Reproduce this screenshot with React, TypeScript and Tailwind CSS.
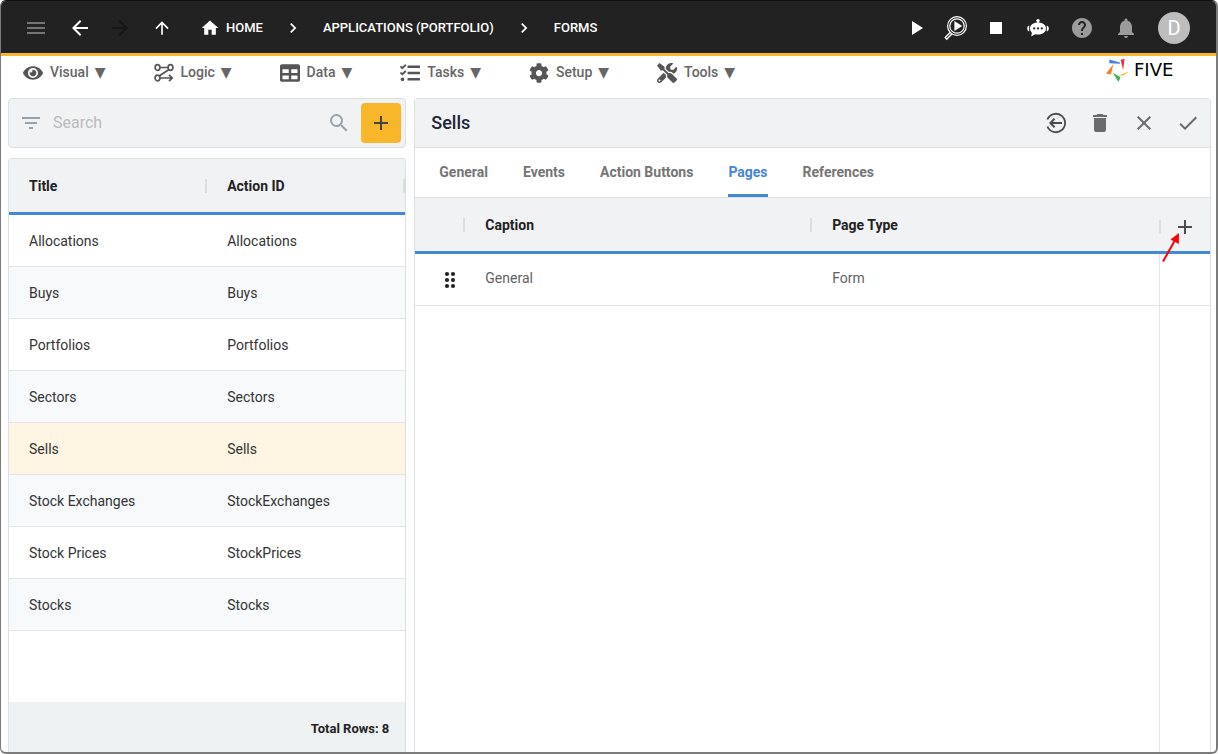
import type { ReactNode } from "react";
import { FaCog, FaEye, FaTable, FaTasks, FaTools } from "react-icons/fa";
import {
  MdAdd,
  MdArrowBack,
  MdArrowForward,
  MdArrowUpward,
  MdCheck,
  MdChevronRight,
  MdClose,
  MdDelete,
  MdFilterList,
  MdHelp,
  MdHome,
  MdMenu,
  MdNotifications,
  MdPlayArrow,
  MdSearch,
  MdStop,
} from "react-icons/md";

const MENUS = [
  { label: "Visual", icon: <FaEye size={20} /> },
  { label: "Logic", icon: <LogicIcon /> },
  { label: "Data", icon: <FaTable size={20} /> },
  { label: "Tasks", icon: <FaTasks size={20} /> },
  { label: "Setup", icon: <FaCog size={20} /> },
  { label: "Tools", icon: <FaTools size={20} /> },
];

const FORMS = [
  { title: "Allocations", actionId: "Allocations" },
  { title: "Buys", actionId: "Buys" },
  { title: "Portfolios", actionId: "Portfolios" },
  { title: "Sectors", actionId: "Sectors" },
  { title: "Sells", actionId: "Sells" },
  { title: "Stock Exchanges", actionId: "StockExchanges" },
  { title: "Stock Prices", actionId: "StockPrices" },
  { title: "Stocks", actionId: "Stocks" },
];

const TABS = ["General", "Events", "Action Buttons", "Pages", "References"];

const SELECTED_FORM = "Sells";
const ACTIVE_TAB = "Pages";

const HEAD_CELL = "border-b-[3px] border-[#4486d9] p-0 font-bold";
const BODY_CELL = "border-b border-[#e2e4e6] p-0";

function LogicIcon() {
  return (
    <svg width="20" height="20" viewBox="0 0 20 20" fill="none" stroke="currentColor" strokeWidth="1.7">
      <ellipse cx="3.5" cy="4.5" rx="2.4" ry="2.8" />
      <ellipse cx="16.5" cy="4.5" rx="2.4" ry="2.8" />
      <ellipse cx="3.5" cy="15" rx="2.4" ry="2.8" />
      <path d="M6 4.5h8M15 6.5 5.2 13M6 15h12M15 11.8l3.2 3.2-3.2 3.2" />
    </svg>
  );
}

function InspectIcon() {
  return (
    <svg width="24" height="26" viewBox="0 0 24 26" fill="none" stroke="currentColor">
      <circle cx="13" cy="11" r="9.4" strokeWidth="1.2" />
      <circle cx="13" cy="11" r="7.2" strokeWidth="1.2" />
      <path d="M6.2 17.2 1.2 22.6l1.6 1.6 5.2-5.4" strokeWidth="1.3" />
      <path d="M10.4 6v10l7.8-5z" fill="currentColor" stroke="none" />
    </svg>
  );
}

function BotIcon() {
  return (
    <svg width="22" height="20" viewBox="0 0 22 20" fill="currentColor">
      <circle cx="11" cy="2.6" r="1.7" />
      <path d="M10.3 3h1.4v3h-1.4z" />
      <path d="M11 4.6c4.8 0 8 2.5 8 6s-3.2 6-8 6c-1 0-2-.1-2.9-.4L4.2 18.4l.7-3.6C3.7 13.7 3 12.2 3 10.6c0-3.5 3.2-6 8-6z" />
      <path d="M2.2 7.6v6C.9 13.2.2 12.1.2 10.6s.7-2.6 2-3zM19.8 7.6v6c1.300-.4 2-1.500 2-3s-.7-2.600-2-3z" />
      <g fill="#222222">
        <circle cx="7.2" cy="10.4" r="1.1" />
        <circle cx="11" cy="10.4" r="1.1" />
        <circle cx="14.8" cy="10.4" r="1.1" />
      </g>
    </svg>
  );
}

function ReturnIcon() {
  return (
    <svg width="22" height="22" viewBox="0 0 22 22" fill="none" stroke="currentColor" strokeWidth="1.8">
      <path d="M2.4 7.5a9.2 9.2 0 1 1 0 7" />
      <path d="M17 11H5.5M9.6 6.8 5.4 11l4.2 4.2" strokeWidth="2" />
    </svg>
  );
}

function DragIcon() {
  return (
    <svg width="12" height="18" viewBox="0 0 12 18" fill="#222222">
      {[3, 9, 15].map((y) => (
        <g key={y}>
          <circle cx="3" cy={y} r="2.1" />
          <circle cx="9" cy={y} r="2.1" />
        </g>
      ))}
    </svg>
  );
}

function LogoMark() {
  return (
    <svg width="24" height="24" viewBox="0 0 24 24">
      <path d="M3.300 1.500 14 4.500v1.300L3.300 5.200z" fill="#3f84dc" />
      <path d="M14.500 1.700 18.600.8l-1.500 11.400z" fill="#e23b3b" />
      <path d="M23.300 13.200 18 17.200l-6.200.8z" fill="#fbb92e" />
      <path d="M6.800 14.800 14.500 19.200l-2 4.700z" fill="#3fae55" />
      <path d="M7.300 6.300 5 16.400 0 15.600z" fill="#f6812f" />
    </svg>
  );
}

function IconButton({
  label,
  className,
  children,
}: {
  label: string;
  className: string;
  children: ReactNode;
}) {
  return (
    <button type="button" aria-label={label} className={`flex items-center justify-center ${className}`}>
      {children}
    </button>
  );
}

// Short grey handle between two header cells
function ColumnHandle() {
  return <span className="h-3.5 w-0.5 bg-[#dcdddf]" />;
}

function TopBar() {
  return (
    <header className="flex h-[55px] shrink-0 items-center justify-between border-b-[3px] border-[#f8b72b] bg-[#222222] pt-0.5 pr-[26px] pl-[11px] text-white">
      <div className="flex items-center">
        <IconButton label="Menu" className="h-11 w-12 text-[#757575]">
          <MdMenu size={24} />
        </IconButton>
        <IconButton label="Back" className="h-11 w-10">
          <MdArrowBack size={24} />
        </IconButton>
        <IconButton label="Forward" className="h-11 w-10 text-[#161616]">
          <MdArrowForward size={24} />
        </IconButton>
        <IconButton label="Up" className="h-11 w-11">
          <MdArrowUpward size={20} />
        </IconButton>
        <nav aria-label="Breadcrumb" className="ml-4 flex items-center text-[13px] font-medium">
          <a href="#home" className="flex items-center gap-1.5">
            <MdHome size={20} />
            HOME
          </a>
          <MdChevronRight size={20} className="mx-5" />
          <a href="#applications">APPLICATIONS (PORTFOLIO)</a>
          <MdChevronRight size={20} className="mx-5" />
          <a href="#forms">FORMS</a>
        </nav>
      </div>
      <div className="flex items-center">
        <IconButton label="Run" className="h-11 w-10">
          <MdPlayArrow size={24} />
        </IconButton>
        <IconButton label="Inspect" className="h-11 w-10">
          <InspectIcon />
        </IconButton>
        <IconButton label="Stop" className="h-11 w-10">
          <MdStop size={24} />
        </IconButton>
        <IconButton label="Assistant" className="h-11 w-11">
          <BotIcon />
        </IconButton>
        <IconButton label="Help" className="h-11 w-11 text-[#9b9b9b]">
          <MdHelp size={24} />
        </IconButton>
        <IconButton label="Notifications" className="h-11 w-11 text-[#9b9b9b]">
          <MdNotifications size={24} />
        </IconButton>
        <button
          type="button"
          aria-label="Account"
          className="ml-2.5 size-8 rounded-full bg-[#bdbdbd] text-xl leading-8 text-white"
        >
          D
        </button>
      </div>
    </header>
  );
}

function MenuBar() {
  return (
    <div className="flex h-[34px] shrink-0 items-center justify-between pr-[22px] pl-[22px]">
      <nav className="flex items-center gap-12">
        {MENUS.map((menu) => (
          <button
            key={menu.label}
            type="button"
            className="flex items-center text-sm font-medium text-[#666666]"
          >
            <span className="text-[#555555]">{menu.icon}</span>
            <span className="pb-0.5 pl-[7px]">{menu.label}</span>
            <span className="pb-0.5 pl-1.5 [font-family:'DejaVu_Sans',sans-serif]">▼</span>
          </button>
        ))}
      </nav>
      <a href="#five" className="flex w-[88px] items-center gap-1 pb-1.5">
        <LogoMark />
        <span className="text-lg leading-5 text-black [font-family:'DejaVu_Sans',sans-serif]">FIVE</span>
      </a>
    </div>
  );
}

function FormList() {
  return (
    <div className="flex flex-col gap-2.5">
      <div className="flex h-[50px] shrink-0 items-center rounded border border-[#dedfe0] bg-[#f1f2f4] pr-1 pl-2.5 text-[#9aa2a9]">
        <MdFilterList size={24} />
        <input
          type="text"
          aria-label="Search"
          placeholder="Search"
          className="min-w-0 flex-1 bg-transparent pl-2.5 text-base text-[#333333] outline-none placeholder:text-[#b9bbbd]"
        />
        <MdSearch size={24} />
        <IconButton label="Add form" className="ml-2.5 size-10 rounded bg-[#f8b72b] text-[#444444]">
          <MdAdd size={24} />
        </IconButton>
      </div>

      <section className="flex flex-1 flex-col overflow-hidden rounded-t border border-b-0 border-[#dedfe0]">
        <table className="w-full table-fixed border-separate border-spacing-0 text-left text-sm text-[#333333]">
          <thead>
            <tr className="h-14 bg-[#f1f2f4] text-[#222222]">
              <th className={`${HEAD_CELL} pl-5`}>
                <div className="flex items-center justify-between">
                  Title <ColumnHandle />
                </div>
              </th>
              <th className={`${HEAD_CELL} pl-5`}>
                <div className="flex items-center justify-between">
                  Action ID <ColumnHandle />
                </div>
              </th>
            </tr>
          </thead>
          <tbody>
            {FORMS.map((form) => (
              <tr
                key={form.title}
                className={`h-[52px] ${
                  form.title === SELECTED_FORM ? "bg-[#fff5e2]" : "even:bg-[#f8f9fb]"
                }`}
              >
                <td className={`${BODY_CELL} pl-5`}>{form.title}</td>
                <td className={`${BODY_CELL} pl-5`}>{form.actionId}</td>
              </tr>
            ))}
          </tbody>
        </table>
        <div className="mt-auto flex h-[50px] items-center justify-end bg-[#eef2f3] pt-1 pr-4 text-[13px] font-bold text-[#222222]">
          Total Rows: 8
        </div>
      </section>
    </div>
  );
}

function FormDetail() {
  return (
    <section className="flex flex-col rounded-t border border-b-0 border-[#dedfe0]">
      <div className="flex h-[49px] shrink-0 items-center justify-between border-b border-[#dedfe0] bg-[#f1f2f4] pl-4">
        <h1 className="text-lg font-medium text-[#1d2433]">Sells</h1>
        <div className="flex text-[#6b6b6b]">
          <IconButton label="Return" className="size-11 text-[#4d4d4d]">
            <ReturnIcon />
          </IconButton>
          <IconButton label="Delete" className="size-11">
            <MdDelete size={24} />
          </IconButton>
          <IconButton label="Cancel" className="size-11">
            <MdClose size={24} />
          </IconButton>
          <IconButton label="Save" className="size-11">
            <MdCheck size={24} />
          </IconButton>
        </div>
      </div>

      <div
        role="tablist"
        className="flex h-[50px] shrink-0 gap-[35px] border-b border-[#dedfe0] pl-6 text-sm font-bold"
      >
        {TABS.map((tab) => (
          <button
            key={tab}
            type="button"
            role="tab"
            aria-selected={tab === ACTIVE_TAB}
            className={`border-b-[3px] pt-0.5 ${
              tab === ACTIVE_TAB
                ? "border-[#4486d9] text-[#4486d9]"
                : "border-transparent text-[#757575]"
            }`}
          >
            {tab}
          </button>
        ))}
      </div>

      <table className="w-full table-fixed border-separate border-spacing-0 text-left text-sm text-[#222222]">
        <colgroup>
          <col className="w-[50px]" />
          <col />
          <col />
          <col className="w-[51px]" />
        </colgroup>
        <thead>
          <tr className="h-14 bg-[#f1f2f4]">
            <th className={HEAD_CELL} aria-label="Order">
              <div className="flex justify-end">
                <ColumnHandle />
              </div>
            </th>
            <th className={`${HEAD_CELL} pl-5`}>
              <div className="flex items-center justify-between">
                Caption <ColumnHandle />
              </div>
            </th>
            <th className={`${HEAD_CELL} pl-5`}>Page Type</th>
            <th className={HEAD_CELL}>
              <div className="relative flex items-center pt-1">
                <ColumnHandle />
                <IconButton label="Add page" className="ml-3 size-6 text-[#4d4d4d]">
                  <MdAdd size={24} />
                </IconButton>
                <svg
                  width="20"
                  height="32"
                  viewBox="0 0 20 32"
                  className="pointer-events-none absolute top-5 left-0.5"
                >
                  <path d="M2 30.500 13.500 10" stroke="#ff0000" strokeWidth="2" />
                  <path d="M18 2 9.500 8.500l8.300 4.500z" fill="#ff0000" />
                </svg>
              </div>
            </th>
          </tr>
        </thead>
        <tbody>
          <tr className="h-[52px] text-[#5f5f5f]">
            <td className={`${BODY_CELL} pl-[29px]`}>
              <DragIcon />
            </td>
            <td className={`${BODY_CELL} pb-1 pl-5`}>General</td>
            <td className={`${BODY_CELL} pb-1 pl-5`}>Form</td>
            <td className={`${BODY_CELL} border-l`} />
          </tr>
        </tbody>
      </table>
      <div className="ml-auto w-[51px] flex-1 border-l border-[#e2e4e6]" />
    </section>
  );
}

export default function App() {
  return (
    <div className="flex min-h-screen flex-col overflow-hidden rounded-md border-t border-r-2 border-b-2 border-l border-t-[#111111] border-r-[#7b7b7b] border-b-[#7b7b7b] border-l-[#7b7b7b] bg-white font-[Roboto,sans-serif]">
      <TopBar />
      <MenuBar />
      <main className="grid flex-1 grid-cols-[1fr_2fr] gap-2 pt-2 pr-[5px] pl-[7px]">
        <FormList />
        <FormDetail />
      </main>
    </div>
  );
}
